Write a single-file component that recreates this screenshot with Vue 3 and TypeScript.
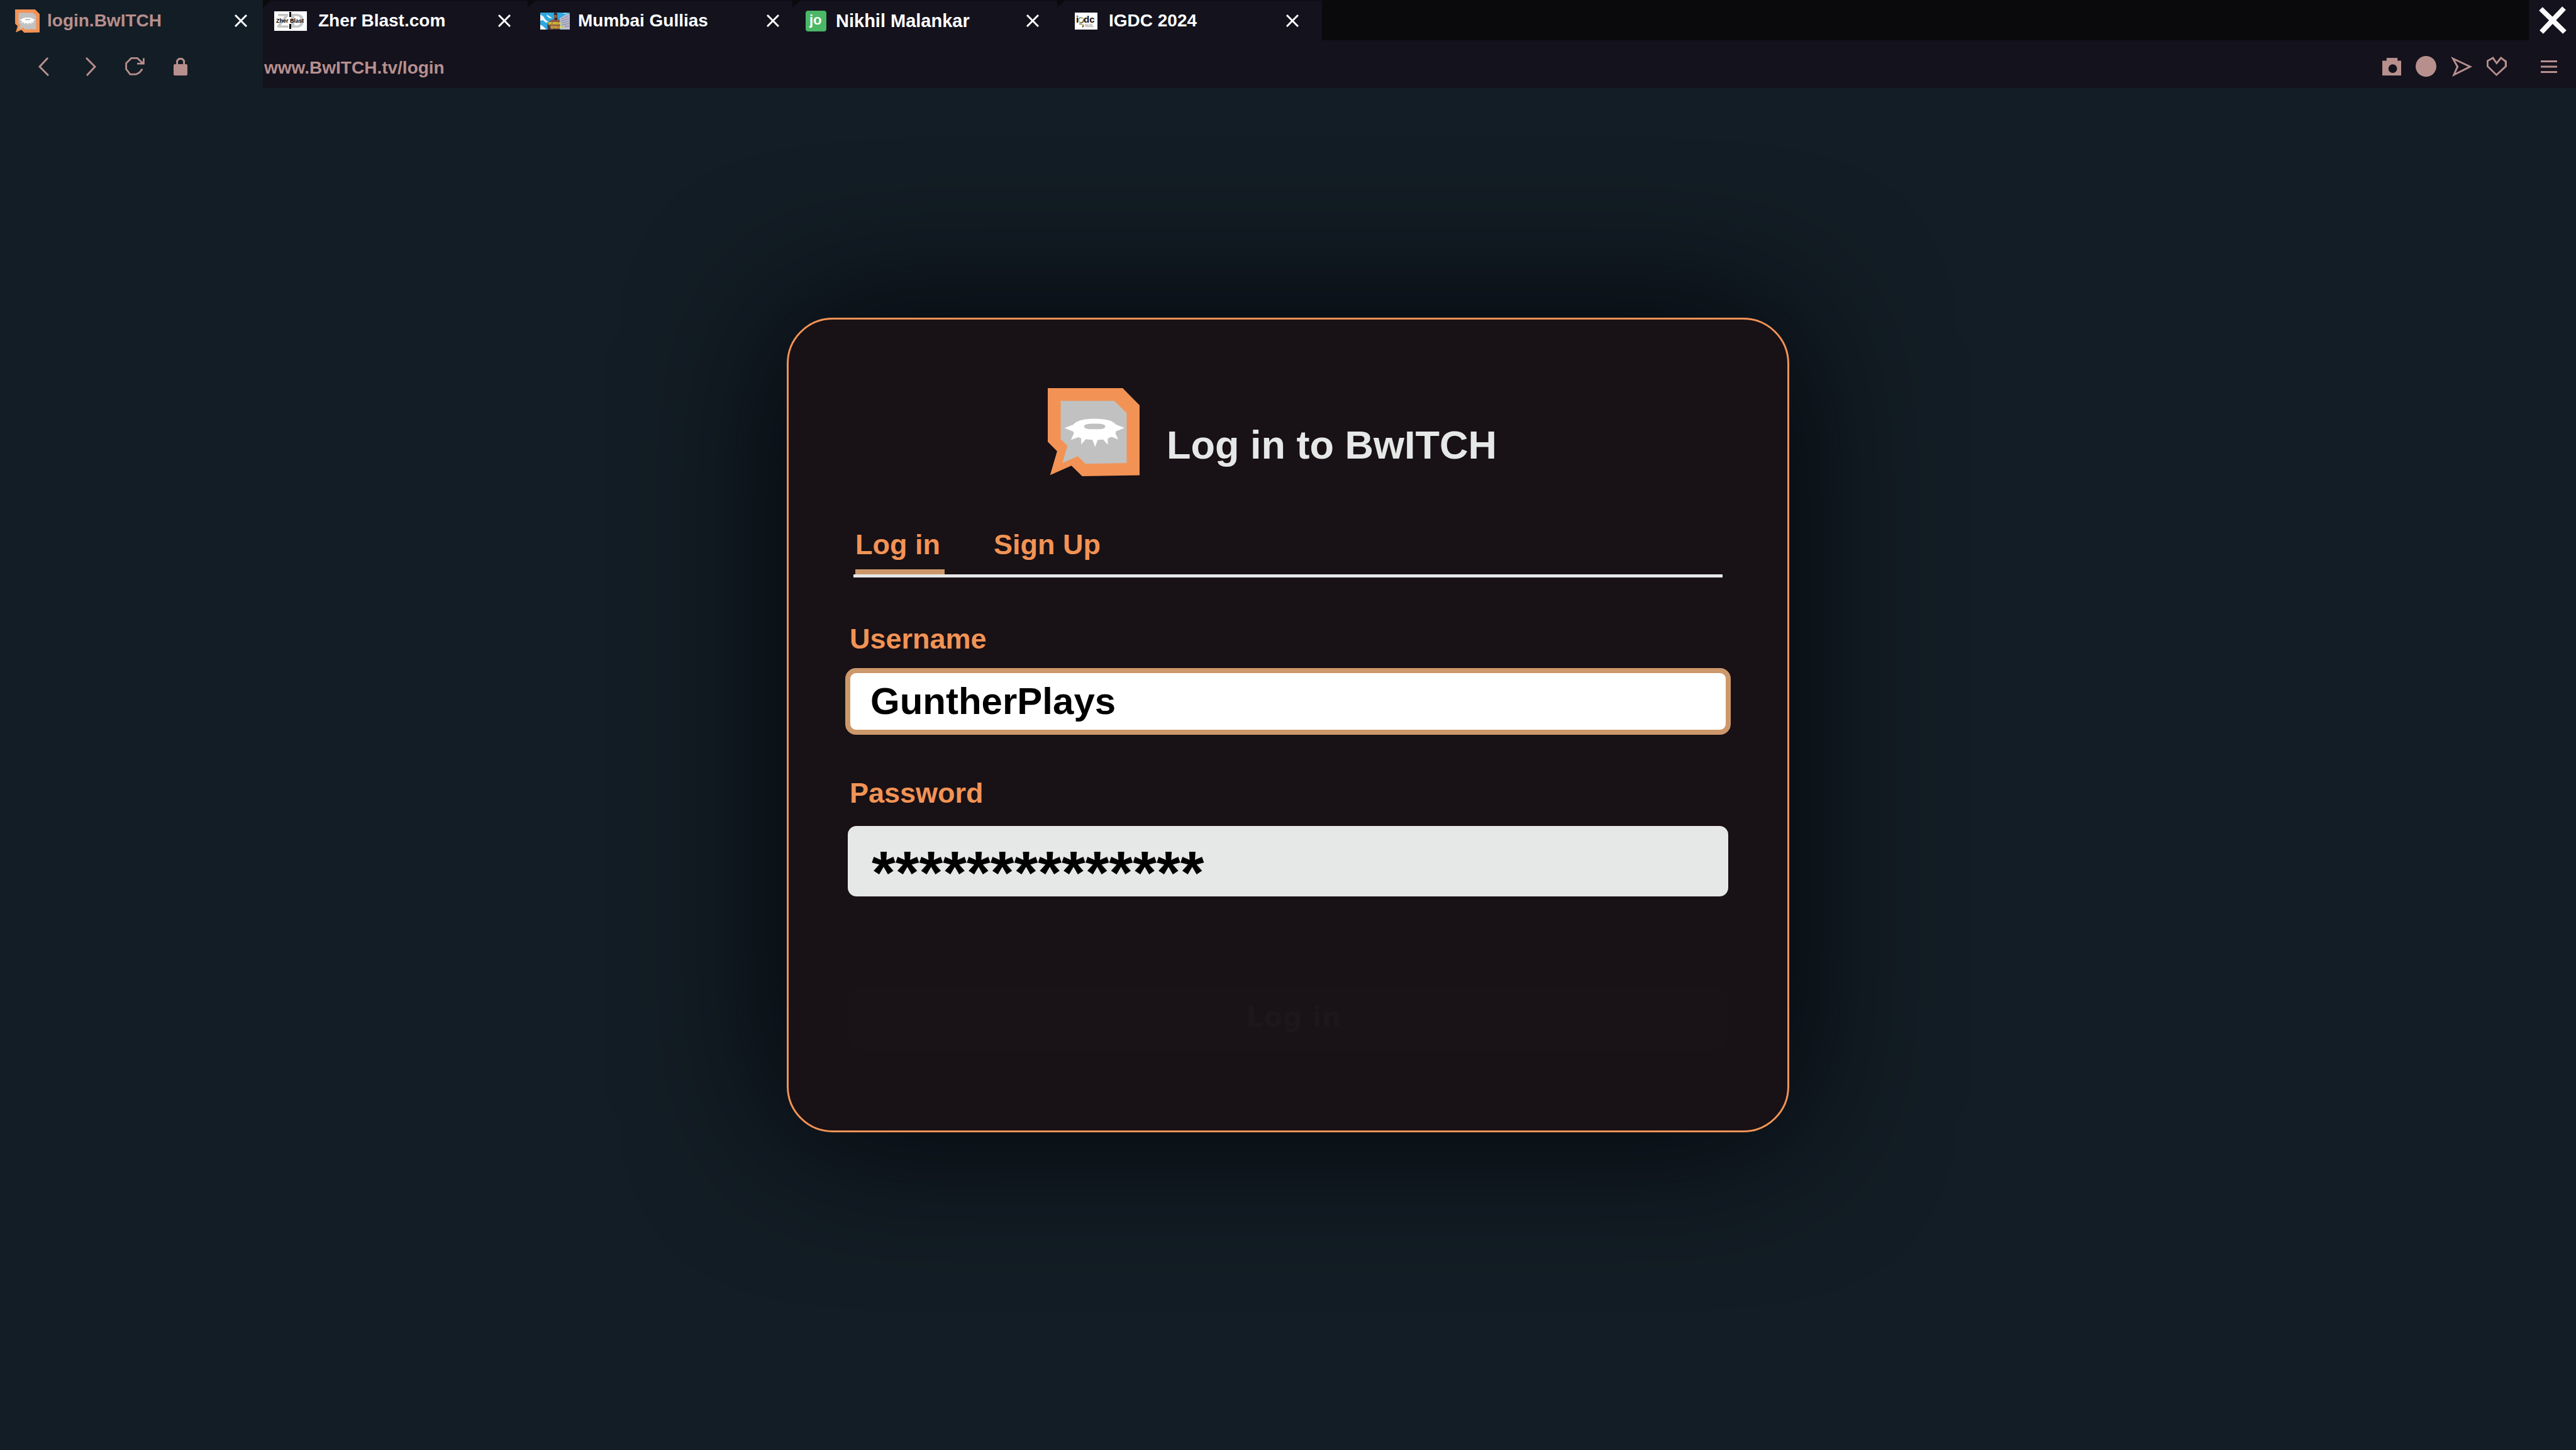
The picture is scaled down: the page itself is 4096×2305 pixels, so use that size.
<script setup lang="ts">
import { ref } from 'vue'

interface Tab {
  id: string
  title: string
}

const tabs: Tab[] = [
  { id: 'bwitch', title: 'login.BwITCH' },
  { id: 'zher', title: 'Zher Blast.com' },
  { id: 'mumbai', title: 'Mumbai Gullias' },
  { id: 'nikhil', title: 'Nikhil Malankar' },
  { id: 'igdc', title: 'IGDC 2024' },
]

const activeTab = ref('bwitch')
const address = ref('www.BwITCH.tv/login')
const mode = ref<'login' | 'signup'>('login')
const username = ref('GuntherPlays')
const password = ref('**************')
</script>

<template>
  <div class="browser">
    <header class="chrome">
      <div class="tab-strip">
        <div
          v-for="tab in tabs"
          :key="tab.id"
          class="tab"
          :class="[`tab--${tab.id}`, { 'tab--active': tab.id === activeTab }]"
        >
          <svg v-if="tab.id === 'bwitch'" class="favicon" width="39" height="37" viewBox="170 118 667 637" preserveAspectRatio="none" aria-hidden="true">
            <path fill="#f29355" d="M170 118H714L837 242V748L420 755L342 679L187 747L238 574L170 506Z" />
            <path fill="#c1c1c1" d="M264 210H654L743 298V659L444 665L388 611L277 660L313 536L264 487Z" />
            <path fill="#fff" d="M291 407L357 381C380 350 440 340 510 340C585 340 640 350 663 380L727 406L666 430L662 446L682 489L634 471L606 481V527L572 489Q553 492 533 492L514 543L495 492Q470 491 446 488L413 525V481L392 473L338 492L360 446L355 432Z" />
            <path fill="#c1c1c1" d="M434 395C434 385 448 376 485 375H537C574 376 588 385 588 395C588 405 574 414 537 415H485C448 414 434 405 434 395Z" />
          </svg>
          <svg v-else-if="tab.id === 'zher'" class="favicon favicon--zher" width="52" height="31" viewBox="0 0 52 31" aria-hidden="true">
            <rect width="52" height="31" fill="#fff" />
            <g class="mark-text" fill="#c6c6c6" font-size="32">
              <text x="4" y="26">Z</text>
              <text x="25" y="26">D</text>
            </g>
            <path fill="#000" d="M24 1h3v8h-3zM24 20h3v8h-3z" />
            <text class="mark-text" x="3" y="18" font-size="9" fill="#000">Zher Blast</text>
          </svg>
          <svg v-else-if="tab.id === 'mumbai'" class="favicon" width="47" height="27" viewBox="0 0 47 27" aria-hidden="true">
            <rect width="47" height="27" fill="#2fa9e0" />
            <path fill="#eef6fb" d="M0 3L5 6L8 11L13 15L9 16L4 12L0 13ZM10 3L15 6L19 9L15 9L11 6ZM0 19L5 22L10 27H0ZM35 2L43 0L40 2Z" />
            <path fill="#b9b8cd" d="M31 9L44 1L47 4V27H32Z" />
            <path stroke="#8587a3" stroke-width="1" d="M33 11L45 5M33 14L46 9M33 17L46 13M34 20L46 17M34 23L46 21" />
            <path fill="#8b5a48" d="M12 17L15 13L22 10H28L31 13V27H14Z" />
            <path fill="#8d5c47" d="M22 3L25 1L28 3L27 9L25 12L22 9Z" />
            <path fill="#2d2222" d="M21 4L23 0L27 1L27 4L24 3ZM22 8L25 9L28 7L26 12L24 12Z" />
            <path fill="#463b43" d="M11 19L14 20L17 27H12ZM20 26H31V27H20Z" />
            <g class="mark-text" fill="#f4e527" font-size="5">
              <text x="13" y="19">MUMBAI</text>
              <text x="17" y="25">GULLIES</text>
            </g>
          </svg>
          <svg v-else-if="tab.id === 'nikhil'" class="favicon" width="33" height="33" viewBox="0 0 33 33" aria-hidden="true">
            <rect width="33" height="33" rx="4" fill="#4ab866" />
            <text class="mark-text" x="6" y="22" font-size="22" fill="#fff">jo</text>
          </svg>
          <svg v-else class="favicon" width="36" height="27" viewBox="0 0 36 27" aria-hidden="true">
            <defs>
              <linearGradient id="igdc-loop" x1="0" y1="0" x2="1" y2="1">
                <stop offset="0" stop-color="#3f8fd0" />
                <stop offset="0.5" stop-color="#e8c34a" />
                <stop offset="1" stop-color="#1c1c1c" />
              </linearGradient>
            </defs>
            <rect width="36" height="27" fill="#fff" />
            <g class="mark-text" fill="#111" font-size="15">
              <text x="2" y="16">i</text>
              <text x="14" y="16">dc</text>
            </g>
            <circle cx="10" cy="12" r="4" fill="none" stroke="url(#igdc-loop)" stroke-width="2" />
            <path fill="none" stroke="url(#igdc-loop)" stroke-width="2" d="M7 18L12 19Q15 20 12 23" />
            <g class="mark-text" fill="#333" font-size="2">
              <text x="16" y="19">INDIA GAME</text>
              <text x="16" y="21">DEVELOPER</text>
              <text x="16" y="23">CONFERENCE</text>
            </g>
          </svg>
          <button class="tab-title" type="button" @click="activeTab = tab.id">{{ tab.title }}</button>
          <button class="icon-button tab-close" type="button" :aria-label="`Close ${tab.title}`">
            <svg width="20" height="20" viewBox="0 0 20 20">
              <path stroke="currentColor" stroke-width="3" d="M1 1L19 19M19 1L1 19" />
            </svg>
          </button>
        </div>
        <button class="icon-button window-close" type="button" aria-label="Close window">
          <svg width="44" height="44" viewBox="0 0 44 44">
            <path stroke="currentColor" stroke-width="8" d="M3 4L41 41M40 3L4 41" />
          </svg>
        </button>
      </div>

      <div class="toolbar">
        <nav class="nav-buttons" aria-label="Navigation">
          <button class="icon-button nav-back" type="button" aria-label="Back">
            <svg width="17" height="30" viewBox="0 0 17 30">
              <path fill="none" stroke="currentColor" stroke-width="3" d="M15 1L2 15L16 29" />
            </svg>
          </button>
          <button class="icon-button" type="button" aria-label="Forward">
            <svg width="17" height="30" viewBox="0 0 17 30">
              <path fill="none" stroke="currentColor" stroke-width="3" d="M1 1L15 15L2 29" />
            </svg>
          </button>
          <button class="icon-button" type="button" aria-label="Reload">
            <svg width="31" height="29" viewBox="0 0 31 29">
              <path fill="none" stroke="currentColor" stroke-width="2.8" d="M27.4 18.6L22.7 24.3L17.4 27.2H8L1.6 18.8V9.6L9.7 1.4H19.4L28 9.5M29.4 1.5V10.2H19" />
            </svg>
          </button>
          <button class="icon-button" type="button" aria-label="Site security">
            <svg width="22" height="28" viewBox="0 0 22 28">
              <rect y="10" width="22" height="18" rx="2" fill="currentColor" />
              <path fill="none" stroke="currentColor" stroke-width="3" d="M5.6 11V4.6L8.6 1.6H13.6L16.6 4.6V11" />
            </svg>
          </button>
        </nav>
        <input v-model="address" class="address" type="text" aria-label="Address" spellcheck="false" />
        <div class="actions">
          <button class="icon-button" type="button" aria-label="Snapshot">
            <svg width="30" height="28" viewBox="0 0 30 28">
              <path fill="currentColor" fill-rule="evenodd" d="M0 4.4H6.8V0H24.2V4.4H30V28H0ZM16.6 10.2A6.9 6.9 0 1 0 16.6 24A6.9 6.9 0 1 0 16.6 10.2Z" />
            </svg>
          </button>
          <button class="icon-button" type="button" aria-label="Profile">
            <svg width="33" height="33" viewBox="0 0 33 33">
              <circle cx="16.5" cy="16.5" r="16.5" fill="currentColor" />
            </svg>
          </button>
          <button class="icon-button" type="button" aria-label="Send">
            <svg width="34" height="32" viewBox="684 413 154 147" preserveAspectRatio="none">
              <path fill="currentColor" fill-rule="evenodd" d="M684 413L838 486L693 560L724 487ZM714 442L740 487L718 532L808 486Z" />
            </svg>
          </button>
          <button class="icon-button" type="button" aria-label="Favourites">
            <svg width="32" height="31" viewBox="935 420 140 140" preserveAspectRatio="none">
              <path fill="currentColor" fill-rule="evenodd" d="M935 447L981 420L1004 457L1033 420L1075 452V492L1003 560L935 492ZM947 455V487L1003 543L1061 487V459L1036 438L1004 478L976 438Z" />
            </svg>
          </button>
          <button class="icon-button menu-button" type="button" aria-label="Menu">
            <svg width="26" height="20" viewBox="0 0 26 20">
              <path fill="currentColor" d="M0 0H26V3H0ZM0 8.5H26V11.5H0ZM0 17H26V20H0Z" />
            </svg>
          </button>
        </div>
      </div>
    </header>

    <main class="page">
      <form class="card" @submit.prevent>
        <div class="brand">
          <svg width="146" height="140" viewBox="170 118 667 637" preserveAspectRatio="none" aria-hidden="true">
            <path fill="#f29355" d="M170 118H714L837 242V748L420 755L342 679L187 747L238 574L170 506Z" />
            <path fill="#c1c1c1" d="M264 210H654L743 298V659L444 665L388 611L277 660L313 536L264 487Z" />
            <path fill="#fff" d="M291 407L357 381C380 350 440 340 510 340C585 340 640 350 663 380L727 406L666 430L662 446L682 489L634 471L606 481V527L572 489Q553 492 533 492L514 543L495 492Q470 491 446 488L413 525V481L392 473L338 492L360 446L355 432Z" />
            <path fill="#c1c1c1" d="M434 395C434 385 448 376 485 375H537C574 376 588 385 588 395C588 405 574 414 537 415H485C448 414 434 405 434 395Z" />
          </svg>
          <h1 class="heading">Log in to BwITCH</h1>
        </div>

        <div class="modes">
          <button class="mode" :class="{ 'mode--active': mode === 'login' }" type="button" @click="mode = 'login'">Log in</button>
          <button class="mode" :class="{ 'mode--active': mode === 'signup' }" type="button" @click="mode = 'signup'">Sign Up</button>
        </div>

        <div class="field">
          <label class="label" for="username">Username</label>
          <input id="username" v-model="username" class="input input--focused" type="text" spellcheck="false" />
        </div>

        <div class="field field--password">
          <label class="label" for="password">Password</label>
          <input id="password" v-model="password" class="input input--masked" type="text" spellcheck="false" />
        </div>

        <button class="submit" type="submit" disabled>Log in</button>
      </form>
    </main>
  </div>
</template>

<style>
body {
  background: #131d25;
}
</style>

<style scoped>
* {
  box-sizing: border-box;
}

.browser {
  display: flex;
  flex-direction: column;
  min-height: 100vh;
  background: #131d25;
  font-family: "Liberation Sans", Arial, sans-serif;
  font-weight: 700;
}

button,
input {
  margin: 0;
  padding: 0;
  border: 0;
  border-radius: 0;
  outline: 0;
  background: none;
  color: inherit;
  font: inherit;
}

svg {
  display: block;
  flex: none;
}

.icon-button {
  display: flex;
  flex: none;
  align-items: center;
  justify-content: center;
}

.mark-text {
  font-family: "Liberation Sans", Arial, sans-serif;
  font-weight: 700;
}

.favicon--zher {
  overflow: visible;
}

/* Tab strip */
.tab-strip {
  display: flex;
  height: 64px;
  background: #0a0a0d;
}

.tab {
  display: flex;
  flex: 0 1 421px;
  align-items: center;
  padding-top: 2px;
  background: #13121d;
  color: #fff;
  font-size: 28px;
  clip-path: polygon(12px 1px, 100% 1px, 100% 100%, 0 100%, 0 12px);
}

.tab--active {
  flex-basis: 418px;
  background: #131d25;
  clip-path: none;
}

.tab--bwitch {
  gap: 12px;
  padding-right: 25px;
  padding-left: 24px;
}

.tab--zher {
  gap: 18px;
  padding-right: 27px;
  padding-left: 18px;
}

.tab--mumbai {
  gap: 13px;
  padding-right: 21px;
  padding-left: 20px;
}

.tab--nikhil {
  gap: 15px;
  padding-right: 29px;
  padding-left: 21px;
  font-size: 29px;
}

.tab--igdc {
  gap: 18px;
  padding-right: 37px;
  padding-left: 28px;
}

.tab-title {
  flex: 1;
  text-align: left;
  white-space: nowrap;
}

.tab--active .tab-title {
  color: #b78f8d;
}

.window-close {
  width: 75px;
  margin-left: auto;
  background: #13121d;
  color: #fafafa;
}

/* Toolbar */
.toolbar {
  display: flex;
  height: 76px;
  background: #13121d;
  color: #b78f8d;
}

.nav-buttons {
  display: flex;
  flex: none;
  align-items: center;
  gap: 46px;
  width: 418px;
  padding-top: 7px;
  padding-left: 61px;
  background: #131d25;
}

.nav-back {
  margin-right: 12px;
}

.address {
  flex: 1;
  min-width: 0;
  padding: 11px 0 0 2px;
  font-size: 28px;
}

.actions {
  display: flex;
  flex: none;
  align-items: center;
  gap: 23px;
  padding-top: 7px;
  padding-right: 30px;
}

.menu-button {
  margin-left: 31px;
}

/* Login card */
.page {
  display: flex;
  flex: 1;
  align-items: center;
  justify-content: center;
  padding-bottom: 140px;
}

.card {
  display: flex;
  flex-direction: column;
  width: min(1594px, 92vw);
  padding: 109px 94px 128px;
  border: 3px solid #f29355;
  border-radius: 73px;
  background: #181115;
  box-shadow: 0 0 240px rgba(2, 3, 8, 0.95);
  color: #f29355;
}

.brand {
  display: flex;
  align-items: flex-end;
  justify-content: center;
  gap: 43px;
  padding-right: 50px;
}

.heading {
  margin: 0 0 14px;
  color: #e5e8e6;
  font-size: 63px;
  line-height: 72px;
}

.modes {
  display: flex;
  gap: 78px;
  margin: 83px 9px 0;
  padding-left: 3px;
  border-bottom: 5px solid #e5e8e6;
}

.mode {
  padding: 0 7px 13px 0;
  border-bottom: 8px solid transparent;
  font-size: 45px;
  line-height: 52px;
}

.mode--active {
  border-bottom-color: #cc976a;
}

.field {
  display: flex;
  flex-direction: column;
  gap: 20px;
  margin-top: 72px;
}

.field--password {
  gap: 26px;
  margin-top: 67px;
}

.label {
  padding-left: 3px;
  font-size: 45px;
  line-height: 52px;
}

.input {
  border-radius: 14px;
  background: #e5e8e6;
  color: #000;
}

.input--focused {
  height: 106px;
  margin: 0 -4px;
  padding: 0 32px 2px;
  border: 8px solid #cc976a;
  border-radius: 17px;
  background: #fff;
  font-size: 60px;
}

.input--masked {
  height: 112px;
  padding: 38px 38px 0;
  font-size: 97px;
}

.submit {
  height: 99px;
  margin-top: 145px;
  padding-bottom: 6px;
  padding-left: 18px;
  border-radius: 20px;
  background: #191216;
  color: #1d171b;
  font-family: "DejaVu Sans", Verdana, sans-serif;
  font-size: 44px;
}
</style>
